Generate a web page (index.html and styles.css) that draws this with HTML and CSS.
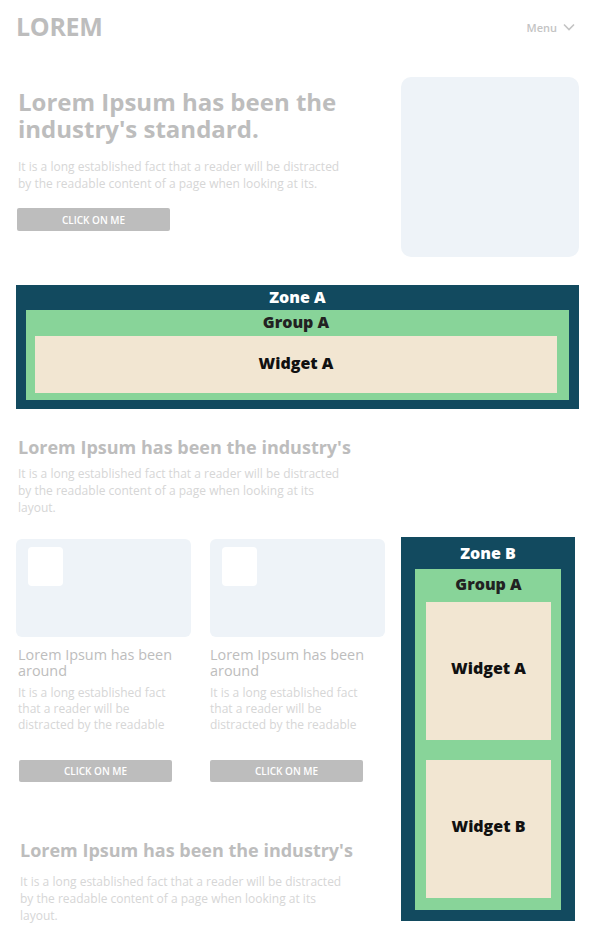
FILE: index.html
```html
<!DOCTYPE html>
<html lang="en">
<head>
    <meta charset="UTF-8">
    <meta name="viewport" content="width=device-width, initial-scale=1.0">
    <title>Lorem</title>
    <link rel="stylesheet" href="styles.css">
</head>
<body>
    <div class="page">
        <header class="topbar">
            <div class="logo">LOREM</div>
            <div class="menu">
                <span>Menu</span>
                <svg class="chevron" width="12" height="8" viewBox="0 0 12 8">
                    <path d="M1 1.5 L6 6.5 L11 1.5" fill="none" stroke="#c4c4c4" stroke-width="1.6"/>
                </svg>
            </div>
        </header>

        <section class="hero">
            <div class="hero-text">
                <h1>Lorem Ipsum has been the industry's standard.</h1>
                <p class="text">It is a long established fact that a reader will be distracted by the readable content of a page when looking at its.</p>
                <button class="btn btn-hero">CLICK ON ME</button>
            </div>
            <div class="hero-image"></div>
        </section>

        <div class="zone zone-a">
            <div class="zone-title">Zone A</div>
            <div class="group group-a">
                <div class="group-title">Group A</div>
                <div class="widget">Widget A</div>
            </div>
        </div>

        <section class="block block-first">
            <h2>Lorem Ipsum has been the industry's</h2>
            <p class="text">It is a long established fact that a reader will be distracted by the readable content of a page when looking at its layout.</p>
        </section>

        <div class="lower">
            <div class="lower-main">
                <div class="cards">
                    <div class="card">
                        <div class="card-image"><div class="card-thumb"></div></div>
                        <h3>Lorem Ipsum has been around</h3>
                        <p class="card-text">It is a long established fact that a reader will be distracted by the readable</p>
                        <button class="btn btn-card">CLICK ON ME</button>
                    </div>
                    <div class="card">
                        <div class="card-image"><div class="card-thumb"></div></div>
                        <h3>Lorem Ipsum has been around</h3>
                        <p class="card-text">It is a long established fact that a reader will be distracted by the readable</p>
                        <button class="btn btn-card">CLICK ON ME</button>
                    </div>
                </div>

                <section class="block block-last">
                    <h2>Lorem Ipsum has been the industry's</h2>
                    <p class="text">It is a long established fact that a reader will be distracted by the readable content of a page when looking at its layout.</p>
                </section>
            </div>

            <div class="zone zone-b">
                <div class="zone-title">Zone B</div>
                <div class="group group-b">
                    <div class="group-title">Group A</div>
                    <div class="widget widget-tall">Widget A</div>
                    <div class="widget widget-tall">Widget B</div>
                </div>
            </div>
        </div>
    </div>
</body>
</html>
```

FILE: styles.css
```css
* {
    margin: 0;
    padding: 0;
    box-sizing: border-box;
}

body {
    font-family: 'Open Sans', 'Noto Sans', sans-serif;
    background: #ffffff;
    color: #bdbdbd;
}

.page {
    padding: 0 15px 0 16px;
}

/* header */
.topbar {
    height: 52px;
    display: flex;
    align-items: center;
    justify-content: space-between;
}

.logo {
    font-size: 25px;
    font-weight: 700;
    color: #bdbdbd;
    letter-spacing: -0.3px;
}

.menu {
    display: flex;
    align-items: center;
    gap: 6px;
    font-size: 11px;
    font-weight: 600;
    color: #c4c4c4;
    margin-right: 4px;
    margin-top: 2px;
}

.chevron {
    display: block;
}

/* hero */
.hero {
    display: flex;
    justify-content: space-between;
    margin-top: 25px;
}

.hero-text {
    padding-left: 2px;
    padding-top: 11px;
}

h1 {
    font-size: 24px;
    font-weight: 700;
    line-height: 27px;
    color: #bdbdbd;
    width: 350px;
    margin-bottom: 16px;
}

.text {
    font-size: 12px;
    line-height: 17px;
    color: #d6d6d6;
    width: 332px;
}

.btn {
    display: block;
    background: #bdbdbd;
    border: none;
    border-radius: 2px;
    color: #ffffff;
    font-family: inherit;
    font-size: 10px;
    font-weight: 600;
    height: 23px;
    width: 153px;
}

.btn-hero {
    margin-top: 16px;
    margin-left: -1px;
}

.hero-image {
    width: 178px;
    height: 180px;
    background: #eef3f8;
    border-radius: 10px;
}

/* zones */
.zone {
    background: #124a5f;
}

.zone-title {
    color: #ffffff;
    font-size: 16px;
    font-weight: 800;
    text-align: center;
}

.group {
    background: #88d499;
}

.group-title {
    color: #222222;
    font-size: 16px;
    font-weight: 800;
    text-align: center;
}

.widget {
    background: #f2e6d2;
    color: #111111;
    font-size: 16px;
    font-weight: 800;
    display: flex;
    align-items: center;
    justify-content: center;
}

.zone-a {
    margin-top: 28px;
    height: 124px;
    padding: 0 10px 9px 10px;
}

.zone-a .zone-title {
    height: 25px;
    line-height: 25px;
}

.group-a {
    padding: 0 12px 7px 9px;
}

.group-a .group-title {
    height: 26px;
    line-height: 25px;
}

.group-a .widget {
    height: 57px;
    padding-bottom: 3px;
}

/* text blocks */
.block {
    padding-left: 2px;
}

h2 {
    font-size: 18px;
    font-weight: 700;
    line-height: 22px;
    color: #bdbdbd;
}

.block-first {
    margin-top: 27px;
}

.block-first .text {
    margin-top: 7px;
}

.block-last {
    margin-top: 57px;
    padding-left: 4px;
}

.block-last .text {
    margin-top: 12px;
}

/* lower row */
.lower {
    display: flex;
    justify-content: space-between;
    margin-top: 21px;
}

.lower-main {
    width: 369px;
}

.cards {
    display: flex;
    gap: 19px;
    margin-top: 2px;
}

.card {
    width: 175px;
}

.card-image {
    height: 98px;
    background: #eef3f8;
    border-radius: 6px;
    padding: 8px 12px;
}

.card-thumb {
    width: 35px;
    height: 39px;
    background: #ffffff;
    border-radius: 4px;
}

h3 {
    font-size: 14.4px;
    font-weight: 400;
    line-height: 16px;
    color: #bdbdbd;
    margin-top: 10px;
}

.card-text {
    font-size: 12px;
    line-height: 16px;
    color: #d6d6d6;
    margin-top: 6px;
    height: 48px;
    width: 160px;
}

.card:first-child h3,
.card:first-child .card-text {
    padding-left: 2px;
}

.btn-card {
    margin-top: 27px;
    height: 22px;
}

.card:first-child .btn-card {
    margin-left: 3px;
}

.zone-b {
    width: 174px;
    height: 384px;
    margin-right: 4px;
    padding: 0 14px 11px 14px;
}

.zone-b .zone-title {
    height: 32px;
    line-height: 32px;
}

.group-b {
    padding: 0 10px 12px 11px;
    display: flex;
    flex-direction: column;
}

.group-b .group-title {
    height: 33px;
    line-height: 30px;
}

.widget-tall {
    height: 138px;
    padding-bottom: 6px;
}

.widget-tall + .widget-tall {
    margin-top: 20px;
}
```
